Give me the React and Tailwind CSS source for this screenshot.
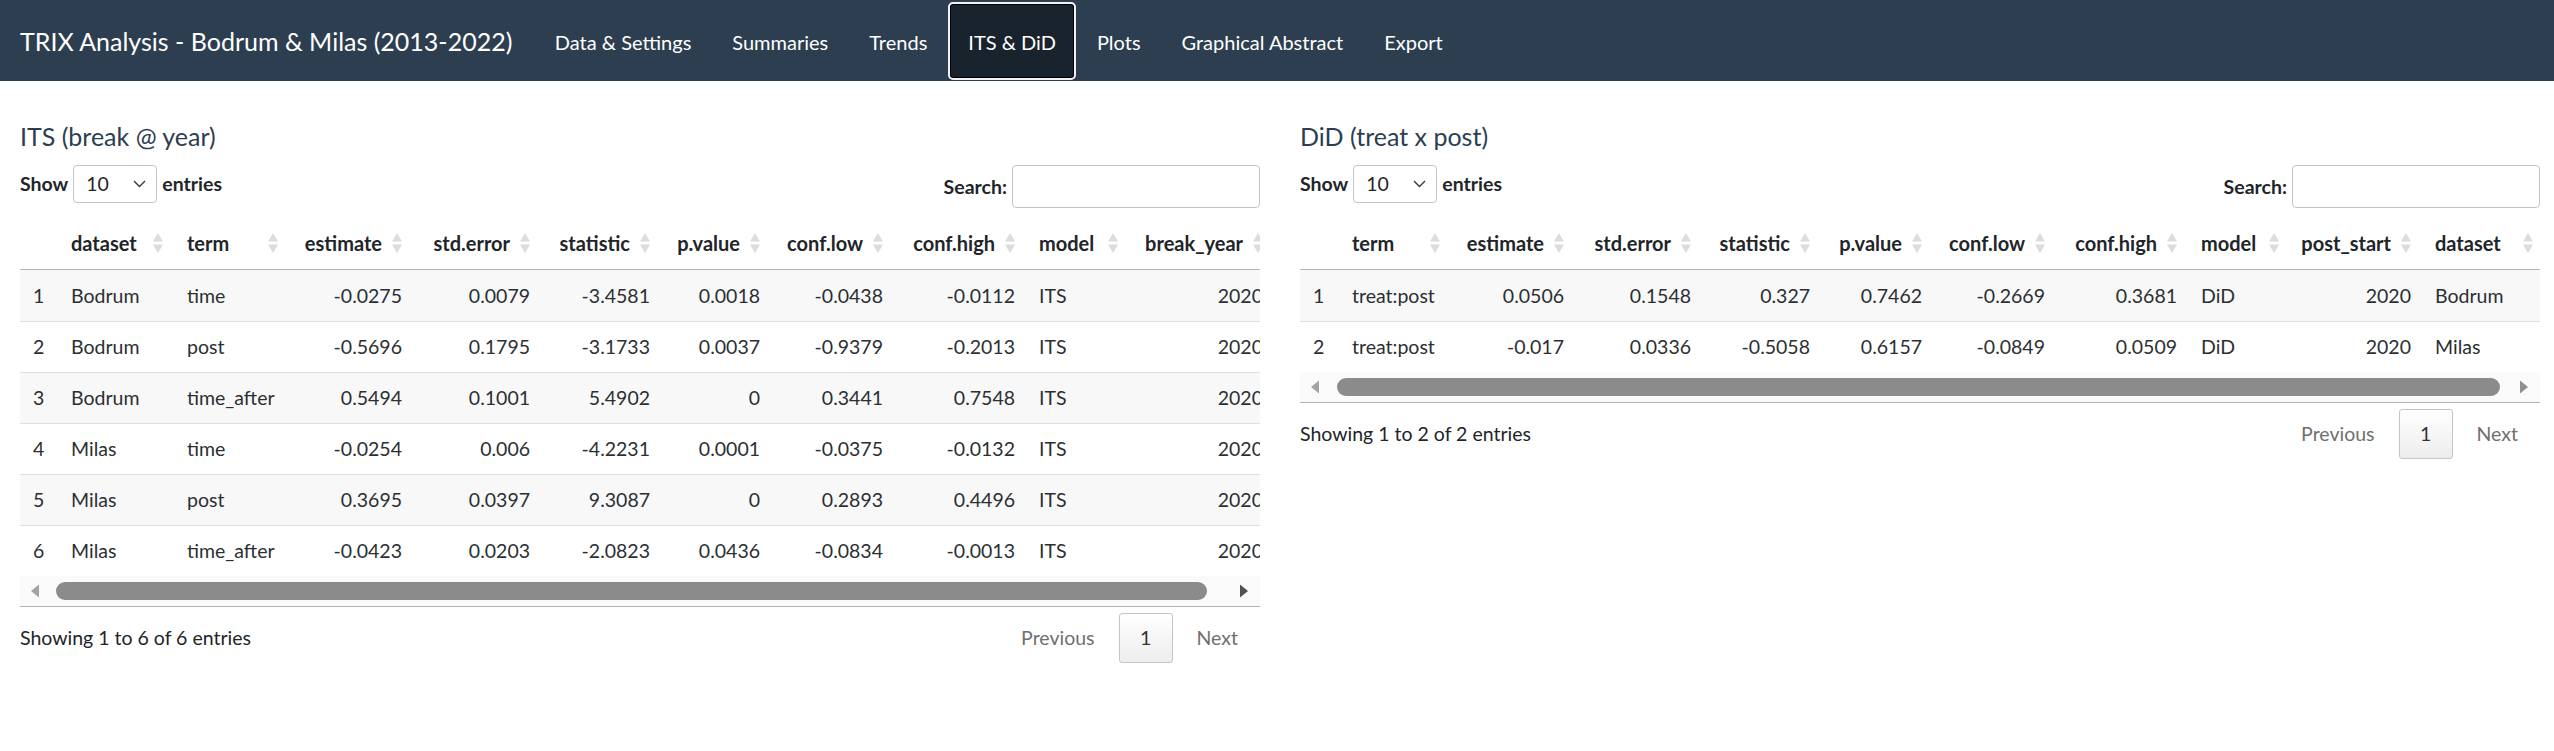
import React from "react";

const NAV_ITEMS = [
  "Data & Settings",
  "Summaries",
  "Trends",
  "ITS & DiD",
  "Plots",
  "Graphical Abstract",
  "Export",
];

const ITS_COLUMNS = [
  { key: "idx", label: "", w: "w-[39px]", align: "idx" },
  { key: "dataset", label: "dataset", w: "w-[116px]", align: "left" },
  { key: "term", label: "term", w: "w-[115px]", align: "left" },
  { key: "estimate", label: "estimate", w: "w-[124px]", align: "right" },
  { key: "std", label: "std.error", w: "w-[128px]", align: "right" },
  { key: "stat", label: "statistic", w: "w-[120px]", align: "right" },
  { key: "p", label: "p.value", w: "w-[110px]", align: "right" },
  { key: "lo", label: "conf.low", w: "w-[123px]", align: "right" },
  { key: "hi", label: "conf.high", w: "w-[132px]", align: "right" },
  { key: "model", label: "model", w: "w-[103px]", align: "left" },
  { key: "year", label: "break_year", w: "w-[145px]", align: "right" },
];

const ITS_ROWS = [
  ["1", "Bodrum", "time", "-0.0275", "0.0079", "-3.4581", "0.0018", "-0.0438", "-0.0112", "ITS", "2020"],
  ["2", "Bodrum", "post", "-0.5696", "0.1795", "-3.1733", "0.0037", "-0.9379", "-0.2013", "ITS", "2020"],
  ["3", "Bodrum", "time_after", "0.5494", "0.1001", "5.4902", "0", "0.3441", "0.7548", "ITS", "2020"],
  ["4", "Milas", "time", "-0.0254", "0.006", "-4.2231", "0.0001", "-0.0375", "-0.0132", "ITS", "2020"],
  ["5", "Milas", "post", "0.3695", "0.0397", "9.3087", "0", "0.2893", "0.4496", "ITS", "2020"],
  ["6", "Milas", "time_after", "-0.0423", "0.0203", "-2.0823", "0.0436", "-0.0834", "-0.0013", "ITS", "2020"],
];

const DID_COLUMNS = [
  { key: "idx", label: "", w: "w-[40px]", align: "idx" },
  { key: "term", label: "term", w: "w-[112px]", align: "left" },
  { key: "estimate", label: "estimate", w: "w-[124px]", align: "right" },
  { key: "std", label: "std.error", w: "w-[127px]", align: "right" },
  { key: "stat", label: "statistic", w: "w-[119px]", align: "right" },
  { key: "p", label: "p.value", w: "w-[112px]", align: "right" },
  { key: "lo", label: "conf.low", w: "w-[123px]", align: "right" },
  { key: "hi", label: "conf.high", w: "w-[132px]", align: "right" },
  { key: "model", label: "model", w: "w-[102px]", align: "left" },
  { key: "post", label: "post_start", w: "w-[132px]", align: "right" },
  { key: "dataset", label: "dataset", w: "w-[122px]", align: "left" },
];

const DID_ROWS = [
  ["1", "treat:post", "0.0506", "0.1548", "0.327", "0.7462", "-0.2669", "0.3681", "DiD", "2020", "Bodrum"],
  ["2", "treat:post", "-0.017", "0.0336", "-0.5058", "0.6157", "-0.0849", "0.0509", "DiD", "2020", "Milas"],
];

function SortIcon() {
  return (
    <svg width="10" height="22" viewBox="0 0 10 22" className="absolute right-[12px] top-1/2 -translate-y-1/2">
      <polygon points="5,1 10,9.5 0,9.5" fill="#dcdcdc" />
      <polygon points="0,12.5 10,12.5 5,21" fill="#dcdcdc" />
    </svg>
  );
}

function HeaderCell({ col }) {
  if (col.align === "idx") {
    return <div className={`${col.w} shrink-0`} />;
  }
  const alignCls =
    col.align === "right" ? "justify-end pr-[32px] pl-[12px]" : "justify-start pl-[12px] pr-[32px]";
  return (
    <div className={`${col.w} shrink-0 relative flex items-center h-full text-[20px] font-bold text-[#212529] ${alignCls}`}>
      <span className="whitespace-nowrap">{col.label}</span>
      <SortIcon />
    </div>
  );
}

function BodyCell({ col, value }) {
  const alignCls =
    col.align === "idx"
      ? "pl-[13px]"
      : col.align === "right"
      ? "justify-end pr-[12px]"
      : "justify-start pl-[12px]";
  return (
    <div className={`${col.w} shrink-0 flex items-center h-full whitespace-nowrap ${alignCls}`}>
      {value}
    </div>
  );
}

function Scrollbar({ thumbCls, rightArrow }) {
  return (
    <div className="h-[31px] bg-[#fafafa] flex items-center relative border-b border-[#b4b4b4]">
      <svg width="8" height="13" viewBox="0 0 8 13" className="absolute left-[11px] top-1/2 -translate-y-1/2">
        <polygon points="8,0 8,13 0,6.5" fill="#a3a3a3" />
      </svg>
      <div className={`h-[18px] rounded-full bg-[#8b8b8b] ${thumbCls}`} />
      <svg width="8" height="13" viewBox="0 0 8 13" className="absolute right-[12px] top-1/2 -translate-y-1/2">
        <polygon points="0,0 0,13 8,6.5" fill={rightArrow} />
      </svg>
    </div>
  );
}

function DataPanel({ title, columns, rows, info, thumbCls, rightArrow }) {
  return (
    <section className="min-w-0">
      <h4 className="text-[25px] leading-[30px] text-[#2c3e50] mb-[14px]">{title}</h4>

      <div className="flex justify-between items-start h-[43px]">
        <div className="flex items-center h-[38px] font-bold text-[#212529]">
          <span>Show</span>
          <div className="mx-[5px] w-[84px] h-[38px] border border-[#bfc5cb] rounded-[4px] flex items-center justify-between pl-[12px] pr-[10px] font-normal">
            <span>10</span>
            <svg width="13" height="8" viewBox="0 0 13 8">
              <polyline points="1,1 6.5,6.5 12,1" fill="none" stroke="#343a40" strokeWidth="1.4" />
            </svg>
          </div>
          <span>entries</span>
        </div>
        <div className="flex items-center h-[43px] font-bold text-[#212529]">
          <span className="mr-[5px]">Search:</span>
          <div className="w-[248px] h-[43px] border border-[#bfc5cb] rounded-[4px] bg-white" />
        </div>
      </div>

      <div className="mt-[9px] overflow-hidden">
        <div className="w-max">
          <div className="flex h-[53px] pb-[1px] border-b border-[#b4b4b4]">
            {columns.map((c) => (
              <HeaderCell key={c.key} col={c} />
            ))}
          </div>
          {rows.map((r, i) => (
            <div
              key={i}
              className={`flex h-[51px] text-[#2b2f33] ${i > 0 ? "border-t border-[#dedede]" : ""} ${
                i % 2 === 0 ? "bg-[#f8f8f8]" : "bg-white"
              }`}
            >
              {columns.map((c, j) => (
                <BodyCell key={c.key} col={c} value={r[j]} />
              ))}
            </div>
          ))}
        </div>
      </div>

      <Scrollbar thumbCls={thumbCls} rightArrow={rightArrow} />

      <div className="flex justify-between items-start">
        <div className="mt-[17px] text-[#212529]">{info}</div>
        <div className="flex items-center mt-[6px] pr-[22px] text-[#6f6f6f]">
          <span>Previous</span>
          <div className="mx-[24px] w-[54px] h-[50px] border border-[#c4c4c4] rounded-[3px] bg-gradient-to-b from-white to-[#ededed] flex items-center justify-center text-[#333]">
            1
          </div>
          <span>Next</span>
        </div>
      </div>
    </section>
  );
}

export default function App() {
  return (
    <div className="min-h-screen bg-white font-['Lato','Liberation_Sans',sans-serif] text-[19.5px] leading-[28px]">
      <nav className="h-[81px] bg-[#2c3e50] flex items-center pl-[20px]">
        <span className="text-white text-[25px] whitespace-nowrap">
          TRIX Analysis - Bodrum &amp; Milas (2013-2022)
        </span>
        <ul className="flex items-center ml-[22px] text-[20px]">
          {NAV_ITEMS.map((item) => (
            <li key={item}>
              <span
                className={`flex items-center h-[78px] pt-[2px] px-[18.5px] border-2 rounded-[5px] text-white whitespace-nowrap ${
                  item === "ITS & DiD"
                    ? "bg-[#19232d] border-[#f2f2f2] shadow-[inset_0_0_0_1px_#000]"
                    : "border-transparent"
                }`}
              >
                {item}
              </span>
            </li>
          ))}
        </ul>
      </nav>

      <main className="grid grid-cols-2 gap-x-[40px] pl-[20px] pr-[14px] pt-[40px]">
        <DataPanel
          title="ITS (break @ year)"
          columns={ITS_COLUMNS}
          rows={ITS_ROWS}
          info="Showing 1 to 6 of 6 entries"
          thumbCls="ml-[36px] mr-[53px] flex-1"
          rightArrow="#505050"
        />
        <DataPanel
          title="DiD (treat x post)"
          columns={DID_COLUMNS}
          rows={DID_ROWS}
          info="Showing 1 to 2 of 2 entries"
          thumbCls="ml-[37px] mr-[40px] flex-1"
          rightArrow="#8f8f8f"
        />
      </main>
    </div>
  );
}
